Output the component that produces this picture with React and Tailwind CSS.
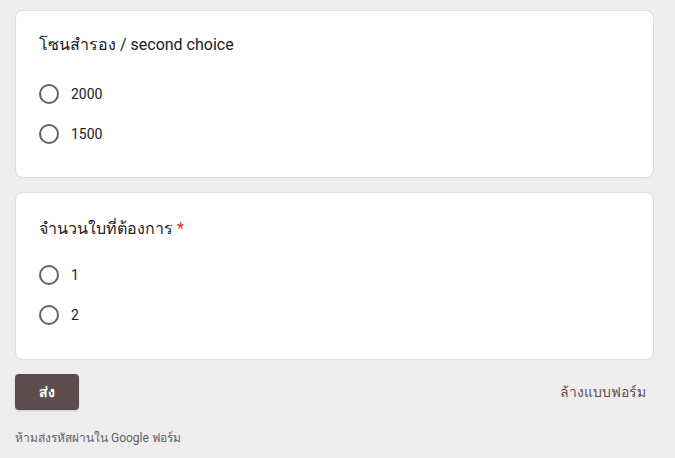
const questions = [
  {
    title: 'โซนสำรอง / second choice',
    required: false,
    options: ['2000', '1500'],
    pad: 'pt-[22px] pb-[23px]',
    gap: 'mt-[17px]',
  },
  {
    title: 'จำนวนใบที่ต้องการ',
    required: true,
    options: ['1', '2'],
    pad: 'pt-[24px] pb-[24px]',
    gap: 'mt-[14px]',
  },
]

function Radio({ label }) {
  return (
    <label className="flex h-10 items-center">
      <span className="h-5 w-5 rounded-full border-2 border-[#5f6368]" />
      <span className="ml-3 text-[14px] text-[#202124]">{label}</span>
    </label>
  )
}

function QuestionCard({ q }) {
  return (
    <div className={`w-[639px] rounded-lg border border-[#dadce0] bg-white px-[23px] ${q.pad}`}>
      <div className="h-6 text-[16px] leading-6 text-[#202124]">
        {q.title}
        {q.required && <span className="ml-1 text-[#d93025]">*</span>}
      </div>
      <div className={q.gap}>
        {q.options.map((opt) => (
          <Radio key={opt} label={opt} />
        ))}
      </div>
    </div>
  )
}

export default function App() {
  return (
    <div className="min-h-[458px] bg-[#efedee] pl-[15px] pt-[10px] font-['Roboto','Noto_Sans',sans-serif]">
      <div className="flex flex-col gap-[14px]">
        {questions.map((q) => (
          <QuestionCard key={q.title} q={q} />
        ))}
      </div>

      <div className="mt-[14px] flex w-[639px] items-center justify-between">
        <button
          type="button"
          className="h-9 w-16 rounded bg-[#5d4c4b] text-[14px] font-bold text-white shadow-sm"
        >
          ส่ง
        </button>
        <button type="button" className="mr-2 text-[14px] font-medium text-[#5f4f4e]">
          ล้างแบบฟอร์ม
        </button>
      </div>

      <p className="mt-[19px] text-[12px] text-[#5f6368]">
        ห้ามส่งรหัสผ่านใน Google ฟอร์ม
      </p>
    </div>
  )
}
